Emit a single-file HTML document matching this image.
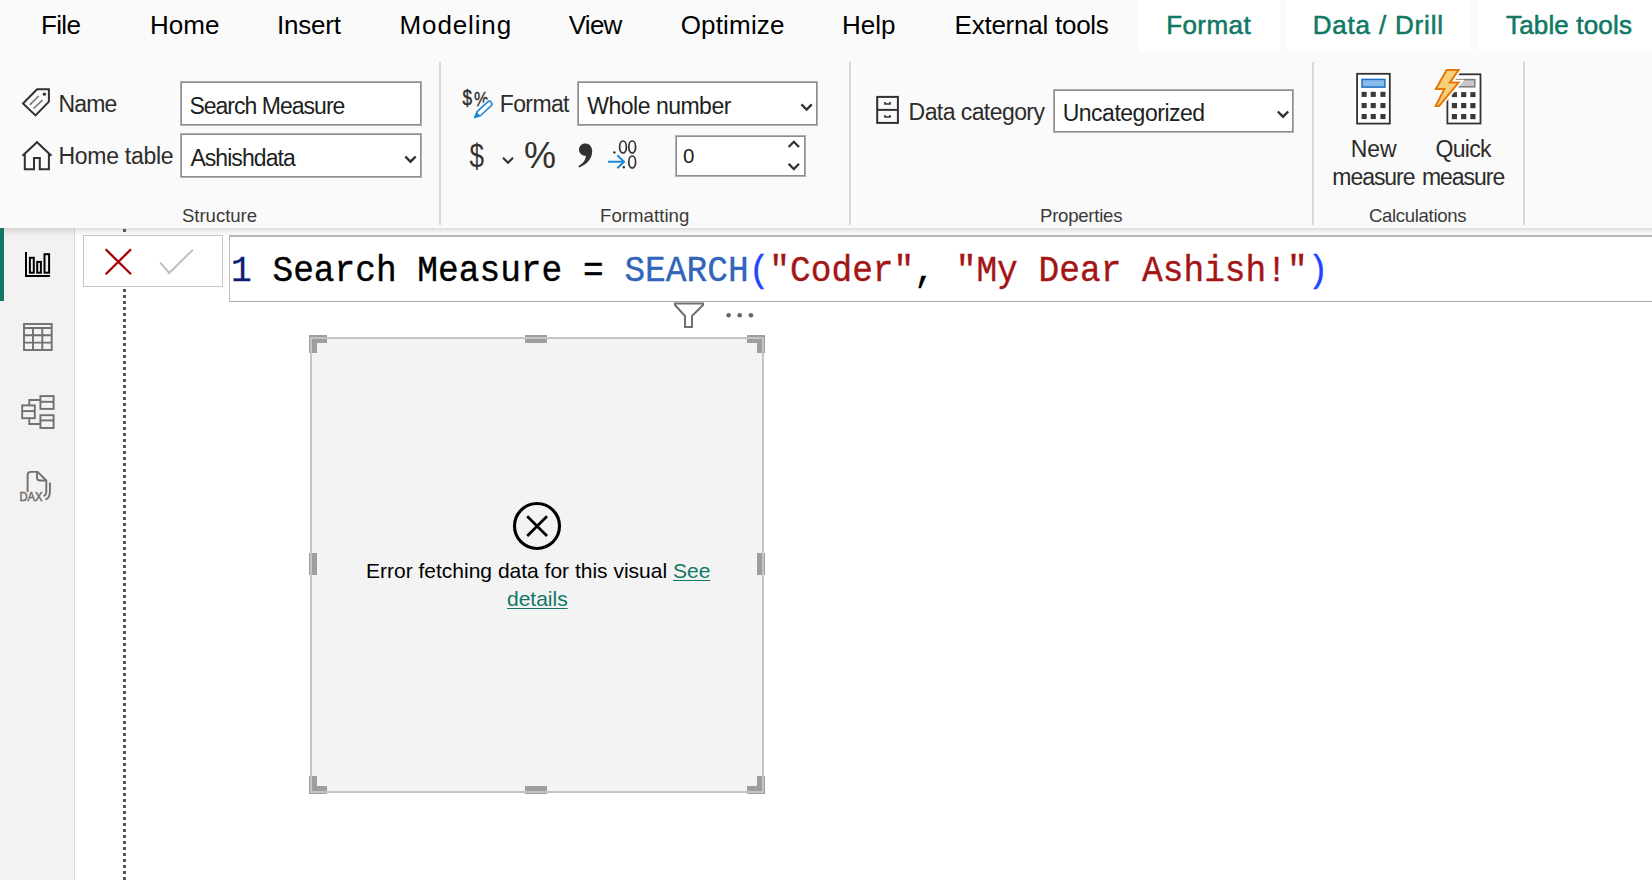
<!DOCTYPE html>
<html><head><meta charset="utf-8">
<style>
*{margin:0;padding:0;box-sizing:border-box}
html,body{width:1652px;height:880px;overflow:hidden;background:#fff;font-family:"Liberation Sans",sans-serif;}
.a{position:absolute;white-space:nowrap;line-height:1}
#tabs{position:absolute;left:0;top:0;width:1652px;height:52px;background:#fafafa}
.tab{position:absolute;top:12px;font-size:26px;color:#000}
.tsel{position:absolute;top:0;height:51px;background:#fff}
.teal{color:#117865;-webkit-text-stroke:0.55px #117865}
#ribbon{position:absolute;left:0;top:52px;width:1652px;height:176px;background:#fafafa}
.lbl{font-size:23px;color:#2d2c2b}
.sec{font-size:18.6px;color:#3b3a39}
.sep{position:absolute;top:62px;width:2px;height:163px;background:#d8d8d8}
.box{position:absolute;background:#fff;border:1px solid #b0b0b0;box-shadow:inset 0 0 0 1px #8c8c8c}
.inp{font-size:23px;color:#201f1e}
#nav{position:absolute;left:0;top:228px;width:75px;height:652px;background:#f3f2f1;border-right:1px solid #dcdcdc}
#shadow{position:absolute;left:0;top:228px;width:1652px;height:9px;background:linear-gradient(rgba(0,0,0,0.13),rgba(0,0,0,0.05) 45%,rgba(0,0,0,0))}
.mono{font-family:"Liberation Mono",monospace;font-size:34.5px;-webkit-text-stroke:0.35px currentColor}
</style></head><body>
<div id="tabs">
  <div class="tsel" style="left:1139px;width:141px"></div>
  <div class="tsel" style="left:1287px;width:184px"></div>
  <div class="tsel" style="left:1478px;width:174px"></div>
  <div class="a tab" style="left:41px;letter-spacing:-0.67px">File</div>
  <div class="a tab" style="left:150px">Home</div>
  <div class="a tab" style="left:277px;letter-spacing:-0.2px">Insert</div>
  <div class="a tab" style="left:399.6px;letter-spacing:0.86px">Modeling</div>
  <div class="a tab" style="left:568.7px;letter-spacing:-0.73px">View</div>
  <div class="a tab" style="left:680.7px;letter-spacing:0.17px">Optimize</div>
  <div class="a tab" style="left:842px">Help</div>
  <div class="a tab" style="left:954.6px;letter-spacing:-0.25px">External tools</div>
  <div class="a tab teal" style="left:1166.2px;letter-spacing:0.42px">Format</div>
  <div class="a tab teal" style="left:1312.7px;letter-spacing:0.82px">Data / Drill</div>
  <div class="a tab teal" style="left:1506px;letter-spacing:0.16px">Table tools</div>
</div>
<div id="ribbon"></div>
<div class="sep" style="left:439px"></div>
<div class="sep" style="left:849px"></div>
<div class="sep" style="left:1312px"></div>
<div class="sep" style="left:1523px"></div>

<!-- Structure -->
<div class="a lbl" style="left:58.5px;top:93px;letter-spacing:-0.83px">Name</div>
<div class="a lbl" style="left:58.5px;top:145px;letter-spacing:-0.28px">Home table</div>
<div class="box" style="left:180px;top:81px;width:242px;height:45px"></div>
<div class="box" style="left:180px;top:133px;width:242px;height:45px"></div>
<div class="a inp" style="left:189.4px;top:95px;letter-spacing:-0.98px">Search Measure</div>
<div class="a inp" style="left:190.4px;top:147px;letter-spacing:-0.94px">Ashishdata</div>
<div class="a sec" style="left:182px;top:207px;letter-spacing:-0.05px">Structure</div>

<!-- Formatting -->
<div class="a lbl" style="left:499.8px;top:93px;letter-spacing:-0.64px">Format</div>
<div class="box" style="left:577px;top:81px;width:241px;height:45px"></div>
<div class="a inp" style="left:587.3px;top:95px;letter-spacing:-0.5px">Whole number</div>
<div class="box" style="left:675px;top:135px;width:131px;height:42px"></div>
<div class="a inp" style="left:683px;top:146px;font-size:20.5px">0</div>
<div class="a sec" style="left:600px;top:207px;letter-spacing:0.05px">Formatting</div>

<!-- Properties -->
<div class="a lbl" style="left:908.6px;top:101px;letter-spacing:-0.57px">Data category</div>
<div class="box" style="left:1053px;top:89px;width:241px;height:44px"></div>
<div class="a inp" style="left:1062.7px;top:102px;letter-spacing:-0.49px">Uncategorized</div>
<div class="a sec" style="left:1040px;top:207px;letter-spacing:-0.25px">Properties</div>

<!-- Calculations -->
<div class="a lbl" style="left:1350.7px;top:138px">New</div>
<div class="a lbl" style="left:1332.3px;top:166px;letter-spacing:-1.05px">measure</div>
<div class="a lbl" style="left:1435.5px;top:138px;letter-spacing:-0.7px">Quick</div>
<div class="a lbl" style="left:1422px;top:166px;letter-spacing:-1.05px">measure</div>
<div class="a sec" style="left:1369px;top:207px;letter-spacing:-0.35px">Calculations</div>

<div id="nav"></div>
<div id="shadow"></div>
<div class="a" style="left:0;top:228px;width:4px;height:73px;background:#117865"></div>

<!-- formula bar -->
<div class="a" style="left:123px;top:229px;width:3px;height:651px;background:repeating-linear-gradient(#555 0 3px,transparent 3px 6px)"></div>

<div class="a" style="left:83px;top:235px;width:140px;height:52px;background:#fff;border:1.5px solid #c8c6c4"></div>
<div class="a" style="left:229px;top:235px;width:1430px;height:67px;background:#fff;border:1.5px solid #bdbdbd;border-top:2px solid #b4b4b4;border-bottom:1px solid #a8a8a8;border-right:none"></div>
<div class="a mono" style="left:231px;top:252.8px;color:#000;transform:scaleY(1.09);transform-origin:0 0"><span style="color:#0b1f78">1</span> Search Measure = <span style="color:#3165bb">SEARCH</span><span style="color:#1f44ff">(</span><span style="color:#a31515">"Coder"</span>, <span style="color:#a31515">"My Dear Ashish!"</span><span style="color:#1f44ff">)</span></div>

<!-- visual -->
<div class="a" style="left:310px;top:337px;width:454px;height:456px;background:#f3f3f3;border:2px solid #c8c8c8"></div>
<div class="a" style="left:366px;top:560px;font-size:21px;color:#000">Error fetching data for this visual <span style="color:#117865;text-decoration:underline;text-decoration-thickness:1.3px;text-underline-offset:1.5px">See</span></div>
<div class="a" style="left:507px;top:588px;font-size:21px;color:#117865;text-decoration:underline;text-decoration-thickness:1.3px;text-underline-offset:1.5px">details</div>


<svg class="a" style="left:0;top:0" width="1652" height="880" viewBox="0 0 1652 880">
 <g fill="none" stroke="#323130" stroke-width="2" stroke-linejoin="miter">
  <!-- tag -->
  <path d="M37.1,89.2 H48.9 V101.7 L35.5,115.4 L23,103.5 Z"/>
  <!-- house -->
  <path d="M22.5,155.8 L37,142.2 L51.4,155.8"/>
  <path d="M24.8,154 V169.2 H34 V158 H39.8 V169.2 H48.9 V154"/>
  <!-- cabinet -->
  <rect x="877.2" y="96.9" width="20.7" height="26"/>
  <path d="M877.2,109.9 H897.9"/>
  <path d="M885,102 V104 H890 V102 M885,115 V117 H890 V115" stroke-width="1.6"/>
  <!-- chevrons -->
  <path d="M405.3,156.5 L410.5,161.7 L415.7,156.5" stroke-width="2.4"/>
  <path d="M801.4,104.3 L806.6,109.5 L811.8,104.3" stroke-width="2.4"/>
  <path d="M1277.8,111.5 L1283,116.7 L1288.2,111.5" stroke-width="2.4"/>
  <path d="M503,157.8 L508,162.8 L513,157.8" stroke-width="2.1"/>
  <path d="M788.6,147 L793.8,141.8 L799,147" stroke-width="2.3"/>
  <path d="M788.6,163.8 L793.8,169 L799,163.8" stroke-width="2.3"/>
 </g>
 <g stroke="#777" stroke-width="1.6">
  <path d="M29.8,104.9 L38.7,96 M33.5,108.5 L42.5,100.1"/>
 </g>
 <circle cx="44.4" cy="94.2" r="1.6" fill="#323130"/>
 <!-- $ and % -->
 <text x="469.5" y="167" font-family="Liberation Sans" font-size="34" fill="#323130" textLength="14.5" lengthAdjust="spacingAndGlyphs">$</text>
 <text x="524" y="168" font-family="Liberation Sans" font-size="36" fill="#323130">%</text>
 <!-- bold comma -->
 <path d="M585.3,143.5 C589.5,143.5 592.2,147 592.2,151.5 C592.2,158.5 587,164.5 579,167.5 L578.5,166 C583,163.5 585.5,160.5 586,156 C582.5,156 579,153.5 579,149.8 C579,146 581.8,143.5 585.3,143.5 Z" fill="#323130"/>
 <!-- .00 -> .0 -->
 <g fill="none" stroke="#323130" stroke-width="1.7">
  <ellipse cx="623" cy="147" rx="3.4" ry="6"/>
  <ellipse cx="632.2" cy="147" rx="3.4" ry="6"/>
  <ellipse cx="632.2" cy="162" rx="3.4" ry="6"/>
 </g>
 <circle cx="614.4" cy="152.4" r="1.2" fill="#323130"/>
 <circle cx="623.8" cy="167.2" r="1.2" fill="#323130"/>
 <g fill="none" stroke="#1e88d4" stroke-width="2">
  <path d="M607.9,161.8 H624.5 M617.3,155.3 L624,161.8 L617.3,168.2"/>
 </g>
 <!-- $% pencil -->
 <text x="462.5" y="105" font-family="Liberation Sans" font-size="22" fill="#323130" stroke="#323130" stroke-width="0.5" textLength="9.5" lengthAdjust="spacingAndGlyphs">$</text>
 <text x="474" y="105.5" font-family="Liberation Sans" font-size="21" fill="#323130" stroke="#323130" stroke-width="0.4" textLength="14.5" lengthAdjust="spacingAndGlyphs">%</text>
 <g transform="translate(474.6,117.6) rotate(-43)">
  <path d="M0,0 L5.5,-3.3 H20 A3.3,3.3 0 0 1 20,3.3 H5.5 Z" fill="#fff" stroke="#fafafa" stroke-width="3"/>
  <path d="M0,0 L5.5,-2.6 H20 A2.6,2.6 0 0 1 20,2.6 H5.5 Z" fill="#fff" stroke="#1e88d4" stroke-width="1.6" stroke-linejoin="round"/>
  <path d="M0,0 L5.5,-2.6 V2.6 Z" fill="#1e88d4"/>
 </g>
 <!-- X / check -->
 <g stroke="#a80000" stroke-width="2.3">
  <path d="M105.7,249.3 L131,274.3 M131,249.3 L105.7,274.3"/>
 </g>
 <path d="M160.2,262.6 L169.2,273 L192.9,249.7" fill="none" stroke="#bebebe" stroke-width="2"/>
 <!-- nav icons -->
 <g fill="none" stroke="#000" stroke-width="2">
  <path d="M26,252 V276 H50"/>
  <rect x="29.9" y="257.8" width="3.9" height="14.9"/>
  <rect x="37.2" y="261.9" width="3.7" height="10.8"/>
  <rect x="44.5" y="254.2" width="4.6" height="18.5"/>
 </g>
 <g fill="none" stroke="#707070" stroke-width="1.9">
  <rect x="24" y="324" width="27.7" height="26"/>
  <path d="M24,328 H51.7 M24,335.2 H51.7 M24,342.6 H51.7 M33,328 V350 M42.3,328 V350"/>
  <rect x="22.2" y="405.4" width="12.6" height="12.8"/>
  <path d="M22.2,411.1 H34.8"/>
  <rect x="40.4" y="396.1" width="13.2" height="12.8"/>
  <path d="M40.4,401.8 H53.6"/>
  <rect x="40.4" y="415.2" width="13.2" height="12.8"/>
  <path d="M40.4,420.4 H53.6"/>
  <path d="M29.3,405.4 V400 H40.4 M29.3,418.2 V424 H40.4"/>
  <path d="M27.6,492 V475 Q27.6,471.9 31,471.9 H37.6 L46.3,480.5 V491 Q46.3,495.5 43.5,496"/>
  <path d="M37,472 V477.5 Q37,480.5 40,480.5 H46"/>
  <path d="M49.9,482.4 V492 Q49.9,498 45.4,499.6"/>
 </g>
 <text x="19.5" y="500.5" font-family="Liberation Sans" font-size="12" fill="#707070" stroke="#707070" stroke-width="0.5" textLength="23" lengthAdjust="spacingAndGlyphs">DAX</text>
 <!-- calculators -->
 <rect x="1357.1" y="73.8" width="32.7" height="49.8" fill="#fff" stroke="#333" stroke-width="1.8"/>
 <rect x="1362" y="79.4" width="22.9" height="7.7" fill="#87bbea" stroke="#1c6fc4" stroke-width="1.5"/>
 <g fill="#3a3a3a">
  <rect x="1361.6" y="91.8" width="5.1" height="5.1"/><rect x="1370.7" y="91.8" width="5.1" height="5.1"/><rect x="1380.4" y="91.8" width="5.1" height="5.1"/>
  <rect x="1361.6" y="103" width="5.1" height="5.1"/><rect x="1370.7" y="103" width="5.1" height="5.1"/><rect x="1380.4" y="103" width="5.1" height="5.1"/>
  <rect x="1361.6" y="114" width="5.1" height="5.1"/><rect x="1370.7" y="114" width="5.1" height="5.1"/><rect x="1380.4" y="114" width="5.1" height="5.1"/>
 </g>
 <rect x="1447.4" y="74.3" width="33.1" height="49.2" fill="#fff" stroke="#333" stroke-width="1.8"/>
 <rect x="1456.2" y="79.6" width="18.6" height="7.2" fill="#c8c8c8" stroke="#7a7a7a" stroke-width="1.5"/>
 <g fill="#3a3a3a">
  <rect x="1451.8" y="92.1" width="5.2" height="5"/><rect x="1461.1" y="92.1" width="5.2" height="5"/><rect x="1470.3" y="92.1" width="5.2" height="5"/>
  <rect x="1451.8" y="103" width="5.2" height="5.2"/><rect x="1461.1" y="103" width="5.2" height="5.2"/><rect x="1470.3" y="103" width="5.2" height="5.2"/>
  <rect x="1451.8" y="114" width="5.2" height="5.2"/><rect x="1461.1" y="114" width="5.2" height="5.2"/><rect x="1470.3" y="114" width="5.2" height="5.2"/>
 </g>
 <path d="M1446.6,70 H1458.6 L1449.8,82.6 H1458.6 L1439.2,106 H1435.6 L1444.4,88.9 H1435.8 Z" fill="#f8d480" stroke="#fff" stroke-width="5.5" stroke-linejoin="miter"/>
 <path d="M1446.6,70 H1458.6 L1449.8,82.6 H1458.6 L1439.2,106 H1435.6 L1444.4,88.9 H1435.8 Z" fill="#f7cf78" stroke="#e5780a" stroke-width="2"/>
 <!-- visual handles -->
 <g fill="#9e9e9e">
  <path d="M309,335 H327 V343 H317 V353 H309 Z"/>
  <path d="M765,794 H747 V786 H757 V776 H765 Z"/>
  <path d="M765,335 H747 V343 H757 V353 H765 Z"/>
  <path d="M309,794 H327 V786 H317 V776 H309 Z"/>
  <rect x="525" y="335" width="22" height="8"/>
  <rect x="525" y="786" width="22" height="8"/>
  <rect x="309" y="553" width="8" height="22"/>
  <rect x="757" y="553" width="8" height="22"/>
 </g>
 <!-- filter & dots -->
 <path d="M675,303.5 H703 V305 L692,316 V327 H685 V316 L675,305 Z" fill="none" stroke="#707070" stroke-width="2"/>
 <g fill="#666"><circle cx="728.6" cy="315.2" r="2.3"/><circle cx="739.7" cy="315.2" r="2.3"/><circle cx="750.9" cy="315.2" r="2.3"/></g>
 <!-- error circle -->
 <circle cx="537" cy="526" r="22.5" fill="none" stroke="#000" stroke-width="3.1"/>
 <path d="M527.2,516.3 L547,536 M547,516.3 L527.2,536" stroke="#000" stroke-width="2.7"/>
</svg>
<div class="a" style="left:310px;top:337px;width:454px;height:456px;border:2px solid #c4c4c4"></div>
</body></html>
